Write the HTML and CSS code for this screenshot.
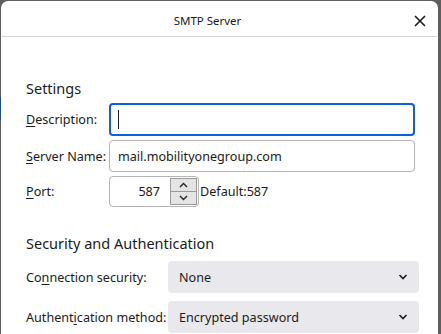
FILE: index.html
```html
<!DOCTYPE html>
<html lang="en">
<head>
  <meta charset="UTF-8">
  <title>SMTP Server</title>
  <link rel="stylesheet" href="styles.css">
</head>
<body>
  <div class="dialog">
    <header class="titlebar">
      <span class="title">SMTP Server</span>
      <button class="close" aria-label="Close">
        <svg width="12" height="12" viewBox="0 0 12 12"><path d="M1 1L11 11M11 1L1 11" stroke="#1b1b1b" stroke-width="1.6" fill="none"/></svg>
      </button>
    </header>

    <div class="content">
      <h2>Settings</h2>
      <div class="form-row">
        <label for="description"><u>D</u>escription:</label>
        <div class="field focused"><span class="caret"></span></div>
      </div>
      <div class="form-row">
        <label for="server"><u>S</u>erver Name:</label>
        <div class="field">mail.mobilityonegroup.com</div>
      </div>
      <div class="form-row">
        <label for="port"><u>P</u>ort:</label>
        <div class="port">
          <span class="port-value">587</span>
          <span class="spinner">
            <span class="spin-btn"><svg width="9" height="6" viewBox="0 0 9 6"><path d="M1 5L4.5 1.5L8 5" stroke="#222" stroke-width="1.4" fill="none"/></svg></span>
            <span class="spin-btn"><svg width="9" height="6" viewBox="0 0 9 6"><path d="M1 1L4.5 4.5L8 1" stroke="#222" stroke-width="1.4" fill="none"/></svg></span>
          </span>
        </div>
        <span class="default">Default:587</span>
      </div>

      <h2 class="section">Security and Authentication</h2>
      <div class="form-row wide">
        <label>Co<u>n</u>nection security:</label>
        <div class="select">None<svg width="10" height="6" viewBox="0 0 10 6"><path d="M1.5 1L5 4.5L8.5 1" stroke="#1b1b1b" stroke-width="1.6" fill="none"/></svg></div>
      </div>
      <div class="form-row wide">
        <label>Authent<u>i</u>cation method:</label>
        <div class="select">Encrypted password<svg width="10" height="6" viewBox="0 0 10 6"><path d="M1.5 1L5 4.5L8.5 1" stroke="#1b1b1b" stroke-width="1.6" fill="none"/></svg></div>
      </div>
    </div>
  </div>
</body>
</html>
```

FILE: styles.css
```css
html, body {
  margin: 0;
  padding: 0;
  height: 100%;
  overflow: hidden;
}

body {
  background-color: #5e5e5e;
  background-image: linear-gradient(to bottom, transparent 97px, #1d4f86 97px, #1d4f86 120px, transparent 120px);
  background-size: 1px 100%;
  background-repeat: no-repeat;
  padding: 1px 3px 0 1px;
  box-sizing: border-box;
  font-family: "Noto Sans", "Open Sans", sans-serif;
  color: #1b1b1b;
}

.dialog {
  background: white;
  border-radius: 7px 7px 0 0;
  height: 100%;
}

.titlebar {
  height: 36px;
  box-sizing: border-box;
  padding-top: 3px;
  border-bottom: 1px solid #d4d4d4;
  margin: 0 1px;
  display: flex;
  align-items: center;
  justify-content: center;
  position: relative;
}

.title {
  font-size: 11.5px;
  margin-right: 24px;
}

.close {
  position: absolute;
  right: 10px;
  top: 13px;
  background: none;
  border: none;
  padding: 0;
  width: 14px;
  height: 14px;
  display: flex;
  align-items: center;
  justify-content: center;
}

.content {
  padding: 37px 19px 0 25px;
}

h2 {
  font-size: 14.5px;
  font-weight: normal;
  margin: 0 0 1px 0;
  line-height: 28px;
}

h2.section {
  margin-top: 22px;
  margin-bottom: 4px;
}

.form-row {
  display: flex;
  align-items: center;
  margin-bottom: 4px;
  font-size: 12.6px;
  white-space: nowrap;
}

.form-row label {
  width: 83px;
  flex-shrink: 0;
}

.form-row.wide label {
  width: 142px;
}

u {
  text-underline-offset: 2px;
}

.field {
  flex: 1;
  height: 32px;
  box-sizing: border-box;
  border: 1px solid #b4b4b4;
  border-radius: 4px;
  padding: 0 8px;
  display: flex;
  align-items: center;
  margin-right: 4px;
}

.field.focused {
  height: 33px;
  border: 2px solid #0a63d6;
  padding-left: 7px;
}

.caret {
  width: 1px;
  height: 19px;
  background: #1b1b1b;
}

.port {
  width: 90px;
  height: 31px;
  box-sizing: border-box;
  border: 1px solid #b4b4b4;
  border-radius: 4px;
  display: flex;
  align-items: center;
  justify-content: flex-end;
  padding-right: 1px;
}

.port-value {
  margin-right: 10px;
}

.spinner {
  display: flex;
  flex-direction: column;
  border: 1px solid #9a9a9a;
  width: 27px;
  height: 27px;
  box-sizing: border-box;
}

.spin-btn {
  flex: 1;
  background: #e4e4e4;
  display: flex;
  align-items: center;
  justify-content: center;
}

.spin-btn + .spin-btn {
  border-top: 1px solid #9a9a9a;
}

.default {
  margin-left: 1px;
}

.select {
  flex: 1;
  height: 32px;
  background: #e9e9ed;
  border-radius: 4px;
  display: flex;
  align-items: center;
  justify-content: space-between;
  padding: 0 11px 0 11px;
  box-sizing: border-box;
}

.form-row.wide {
  margin-bottom: 8px;
}
```
